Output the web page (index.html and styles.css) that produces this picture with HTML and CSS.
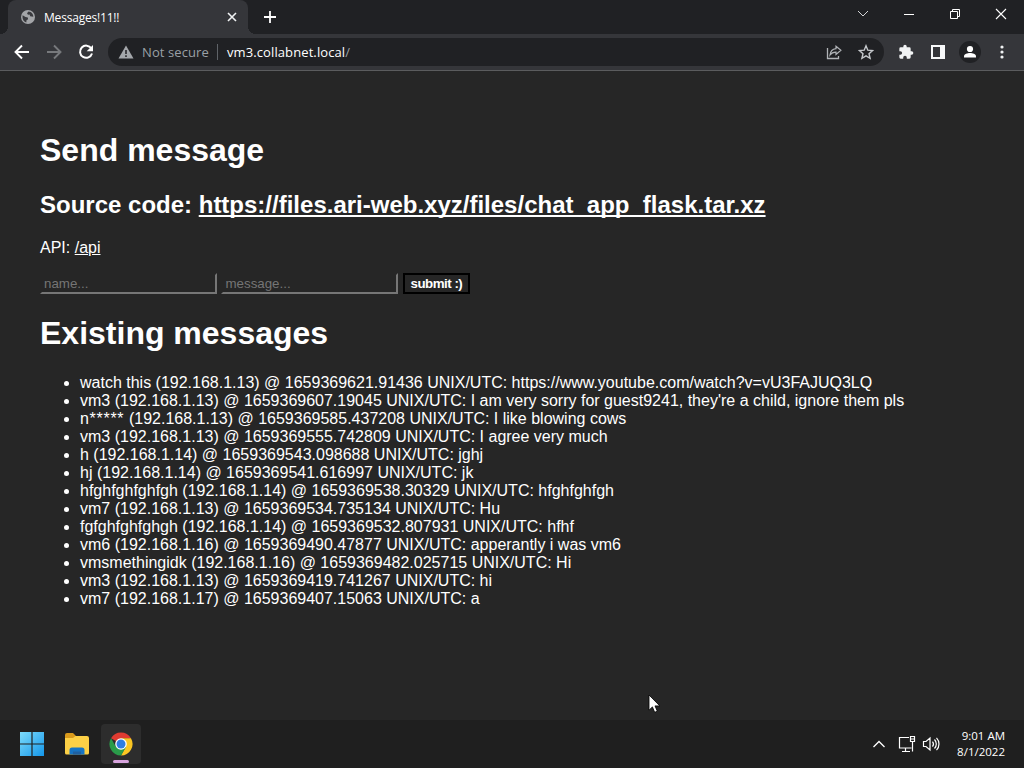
FILE: index.html
```html
<!DOCTYPE html>
<html lang="en">
<head>
  <meta charset="UTF-8">
  <title>Messages!11!!</title>
  <link rel="stylesheet" href="styles.css">
</head>
<body>
  <div class="tabstrip">
    <div class="tab">
      <svg class="globe" width="14" height="14" viewBox="0 0 14 14"><circle cx="7" cy="7" r="7" fill="#a3a5a8"/><path d="M1.6 5.2 4.5 7l2.3.5.3 1.8-1.6 1-.2 2.1C2.8 11.800 1.100 9 1.600 5.200zM7.500 1.400 6 3.300l1 1.500 1.600-.2.6 1.600 3.100.6C12.500 4 10.300 1.600 7.500 1.400z" fill="#393a3e"/></svg>
      <span class="tab-title">Messages!11!!</span>
      <svg width="10" height="10" viewBox="0 0 10 10"><path d="M1 1l8 8M9 1L1 9" stroke="#f1f3f4" stroke-width="1.6"/></svg>
    </div>
    <svg class="new-tab" width="12" height="12" viewBox="0 0 12 12"><path d="M6 0v12M0 6h12" stroke="#fff" stroke-width="1.8"/></svg>
    <div class="window-buttons">
      <svg width="12" height="12" viewBox="0 0 12 12"><path d="M1 3l5 5 5-5" fill="none" stroke="#d5d6d8"/></svg>
      <svg width="12" height="12" viewBox="0 0 12 12"><path d="M1 6.500h10" stroke="#fff"/></svg>
      <svg width="12" height="12" viewBox="0 0 12 12"><path d="M1.500 3.500h7v7h-7zM3.500 3.500v-2h7v7h-2" fill="none" stroke="#fff"/></svg>
      <svg width="12" height="12" viewBox="0 0 12 12"><path d="M1 1l10 10M11 1L1 11" stroke="#fff" stroke-width="1.1"/></svg>
    </div>
  </div>

  <div class="toolbar">
    <svg class="nav" width="16" height="16" viewBox="0 0 16 16"><path d="M15 8H2M8 1.500L1.500 8 8 14.500" fill="none" stroke="#fff" stroke-width="1.900"/></svg>
    <svg class="nav" width="16" height="16" viewBox="0 0 16 16"><path d="M1 8h13M8 1.500L14.500 8 8 14.500" fill="none" stroke="#77797c" stroke-width="1.900"/></svg>
    <svg class="nav" width="16" height="16" viewBox="0 0 16 16"><path d="M13.300 4.400A6.100 6.100 0 1 0 14 9.500" fill="none" stroke="#fff" stroke-width="2"/><path d="M15 1v6.300H8.700z" fill="#fff"/></svg>
    <div class="omnibox">
      <svg width="16" height="14" viewBox="0 0 16 14"><path d="M8 .5L15.500 13.500H.5z" fill="#a4a7ab"/><path d="M8 5v4M8 10.300V12" stroke="#202124" stroke-width="1.500"/></svg>
      <span class="not-secure">Not secure</span>
      <span class="divider"></span>
      <span class="url">vm3.collabnet.local<i>/</i></span>
      <svg class="share" width="16" height="16" viewBox="0 0 16 16"><path d="M1.500 4v10.500h11V12" fill="none" stroke="#b0b3b7" stroke-width="1.300"/><path d="M10 2.200L14.900 6.300 10 10.400V8.100C7.300 8 5.500 8.900 4 11c.4-3.500 2.500-6 6-6.400z" fill="none" stroke="#b0b3b7" stroke-width="1.200"/></svg>
      <svg width="16" height="16" viewBox="0 0 16 16"><path d="M8 1.800l1.800 4.400 4.800.4-3.600 3.100 1.100 4.700L8 11.900l-4.100 2.500L5 9.700 1.400 6.600l4.800-.4z" fill="none" stroke="#c5c8cc" stroke-width="1.400"/></svg>
    </div>
    <svg class="puzzle" width="16" height="16" viewBox="0 0 24 24"><path d="M20.500 11H19V7a2 2 0 0 0-2-2h-4V3.500a2.500 2.500 0 0 0-5 0V5H4a2 2 0 0 0-2 2v3.800h1.500a2.700 2.700 0 0 1 0 5.400H2V20a2 2 0 0 0 2 2h3.800v-1.500a2.700 2.700 0 0 1 5.400 0V22H17a2 2 0 0 0 2-2v-4h1.500a2.500 2.500 0 0 0 0-5z" fill="#f1f3f4"/></svg>
    <svg class="panel" width="14" height="14" viewBox="0 0 14 14"><path d="M0 0h14v14H0zM2 2v10h7V2z" fill="#f8f9fa" fill-rule="evenodd"/></svg>
    <svg class="profile" width="22" height="22" viewBox="0 0 22 22"><circle cx="11" cy="11" r="11" fill="#202124"/><circle cx="11" cy="8" r="3.100" fill="#fff"/><path d="M5 16.500v-1.300c0-2 3.500-3.200 6-3.200s6 1.200 6 3.200v1.300z" fill="#fff"/></svg>
    <svg class="kebab" width="4" height="14" viewBox="0 0 4 14"><g fill="#f1f3f4"><circle cx="2" cy="2" r="1.600"/><circle cx="2" cy="7" r="1.600"/><circle cx="2" cy="12" r="1.600"/></g></svg>
  </div>

  <main class="page">
    <h1>Send message</h1>
    <h2>Source code: <a href="#">https://files.ari-web.xyz/files/chat_app_flask.tar.xz</a></h2>
    <p>API: <a href="#">/api</a></p>
    <form>
      <input type="text" placeholder="name...">
      <input type="text" placeholder="message...">
      <button type="button">submit :)</button>
    </form>
    <h1>Existing messages</h1>
    <ul>
      <li>watch this (192.168.1.13) @ 1659369621.91436 UNIX/UTC: https://www.youtube.com/watch?v=vU3FAJUQ3LQ</li>
      <li>vm3 (192.168.1.13) @ 1659369607.19045 UNIX/UTC: I am very sorry for guest9241, they're a child, ignore them pls</li>
      <li><span class="masked">n*****</span> (192.168.1.13) @ 1659369585.437208 UNIX/UTC: I like blowing cows</li>
      <li>vm3 (192.168.1.13) @ 1659369555.742809 UNIX/UTC: I agree very much</li>
      <li>h (192.168.1.14) @ 1659369543.098688 UNIX/UTC: jghj</li>
      <li>hj (192.168.1.14) @ 1659369541.616997 UNIX/UTC: jk</li>
      <li>hfghfghfghfgh (192.168.1.14) @ 1659369538.30329 UNIX/UTC: hfghfghfgh</li>
      <li>vm7 (192.168.1.13) @ 1659369534.735134 UNIX/UTC: Hu</li>
      <li>fgfghfghfghgh (192.168.1.14) @ 1659369532.807931 UNIX/UTC: hfhf</li>
      <li>vm6 (192.168.1.16) @ 1659369490.47877 UNIX/UTC: apperantly i was vm6</li>
      <li>vmsmethingidk (192.168.1.16) @ 1659369482.025715 UNIX/UTC: Hi</li>
      <li>vm3 (192.168.1.13) @ 1659369419.741267 UNIX/UTC: hi</li>
      <li>vm7 (192.168.1.17) @ 1659369407.15063 UNIX/UTC: a</li>
    </ul>
  </main>

  <footer class="taskbar">
    <svg class="start" width="24" height="24" viewBox="0 0 24 24">
      <defs><linearGradient id="win" x1="0" y1="0" x2="24" y2="24" gradientUnits="userSpaceOnUse"><stop offset="0" stop-color="#7ddcfb"/><stop offset="1" stop-color="#1496ea"/></linearGradient></defs>
      <path d="M0 0h11.400v11.400H0zM12.600 0H24v11.400H12.600zM0 12.600h11.400V24H0zM12.600 12.600H24V24H12.600z" fill="url(#win)"/>
    </svg>
    <svg class="explorer" width="26" height="24" viewBox="0 0 26 24">
      <path d="M1 3a2 2 0 0 1 2-2h6l3 3v5H1z" fill="#d99a1c"/>
      <path d="M1 6h8l2.500-2H23a2 2 0 0 1 2 2v15a1.500 1.500 0 0 1-1.500 1.500h-21A1.500 1.500 0 0 1 1 21z" fill="#fcd046"/>
      <path d="M5.500 22.500V18a2.500 2.500 0 0 1 2.500-2.500h10a2.500 2.500 0 0 1 2.500 2.500v4.500z" fill="#1674c4"/><path d="M9 19.500h8v3H9z" fill="#2060a0"/>
    </svg>
    <div class="task-active">
      <svg width="24" height="24" viewBox="0 0 24 24">
        <path d="M12 12L2.040 6.250A11.500 11.500 0 0 1 21.960 6.250H12z" fill="#df3b31"/>
        <path d="M12 12L21.960 6.250A11.500 11.500 0 0 1 12 23.500L17 14.500z" fill="#fbc622"/>
        <path d="M12 12L17 14.900 12 23.500A11.500 11.500 0 0 1 2.040 6.250L7 14.900z" fill="#2a9c4a"/>
        <path d="M12 6.250h9.960L17 14.900z" fill="#fbc622"/>
        <circle cx="12" cy="12" r="5.800" fill="#fff"/><circle cx="12" cy="12" r="4.500" fill="#2f7de1"/>
      </svg>
    </div>
    <div class="tray">
      <svg class="chevron" width="14" height="8" viewBox="0 0 14 8"><path d="M1.500 7L7 1.500 12.500 7" fill="none" stroke="#fff" stroke-width="1.300"/></svg>
      <svg class="network" width="18" height="18" viewBox="0 0 18 18"><path d="M11 2.500H1.500v10.500H13.500M7.500 13v3M4 16.500h8M14.500 7v9.500M12.500 1.500h4v5h-4zM12.500 4h4" fill="none" stroke="#fff" stroke-width="1.200"/></svg>
      <svg class="volume" width="18" height="16" viewBox="0 0 18 16"><path d="M1.500 5.500H4L8 2v12L4 10.500H1.500zM10.500 5.500a4 4 0 0 1 0 5M12.500 3.500a6.500 6.500 0 0 1 0 9M14.500 1.800a9 9 0 0 1 0 12.400" fill="none" stroke="#fff" stroke-width="1.200"/></svg>
      <div class="clock"><div>9:01 AM</div><div>8/1/2022</div></div>
    </div>
  </footer>

  <svg class="cursor" width="13" height="20" viewBox="0 0 13 20"><path d="M1 1v15.200l3.400-3.300 2.300 5.400 2.600-1.100L7 11.900h4.800z" fill="#fff" stroke="#000" stroke-width=".8"/></svg>
</body>
</html>
```
FILE: styles.css
```css
* {
  box-sizing: border-box;
}

body {
  margin: 0;
  height: 768px;
  overflow: hidden;
  display: flex;
  flex-direction: column;
  background: #262626;
  color: #fff;
  font-family: "Open Sans", "Noto Sans", sans-serif;
}

svg {
  flex: none;
}

/* Tab strip */
.tabstrip {
  height: 34px;
  flex: none;
  display: flex;
  background: #202124;
  padding-left: 8px;
}

.tab {
  position: relative;
  width: 240px;
  height: 34px;
  display: flex;
  align-items: center;
  padding: 0 11px 0 13px;
  background: #35363a;
  border-radius: 8px 8px 0 0;
}

/* Flared bottom corners of the active tab */
.tab::before,
.tab::after {
  content: "";
  position: absolute;
  bottom: 0;
  width: 8px;
  height: 8px;
}

.tab::before {
  left: -8px;
  background: radial-gradient(circle at 0 0, transparent 8px, #35363a 8px);
}

.tab::after {
  right: -8px;
  background: radial-gradient(circle at 100% 0, transparent 8px, #35363a 8px);
}

.tab-title {
  flex: 1;
  margin-left: 9px;
  font-size: 12px;
  letter-spacing: -0.2px;
}

.new-tab {
  margin: 11px 0 0 16px;
}

.window-buttons {
  display: flex;
  gap: 34px;
  margin: 8px 17px 0 auto;
}

/* Toolbar */
.toolbar {
  height: 37px;
  flex: none;
  display: flex;
  align-items: center;
  padding-left: 14px;
  background: #35363a;
  border-bottom: 1px solid #5b5c5e;
}

.nav {
  margin-right: 16px;
}

.omnibox {
  width: 776px;
  height: 28px;
  margin-left: -2px;
  padding: 0 10px;
  display: flex;
  align-items: center;
  background: #202124;
  border-radius: 14px;
  font-size: 13px;
}

.not-secure {
  width: 67px;
  margin-left: 8px;
  color: #9aa0a6;
  white-space: nowrap;
  letter-spacing: 0.1px;
}

.divider {
  width: 1px;
  height: 16px;
  margin: 0 9px 0 8px;
  background: #5f6368;
}

.url {
  letter-spacing: 0.1px;
}

.url i {
  font-style: normal;
  color: #9aa0a6;
}

.share {
  margin: 0 16px 0 auto;
}

.puzzle {
  margin-left: 14px;
}

.panel {
  margin-left: 17px;
}

.profile {
  margin-left: 14px;
}

.kebab {
  margin-left: 19px;
}

/* Page */
.page {
  flex: 1;
  padding: 40px;
  font-family: "Liberation Sans", Arial, sans-serif;
  font-size: 16px;
  line-height: 18px;
}

h1 {
  margin: 21.4px 0 22.4px;
  font-size: 32px;
  line-height: 36px;
}

h2 {
  margin: 20px 0 21px;
  font-size: 24px;
  line-height: 27px;
}

p {
  margin: 16px 0;
}

a {
  color: #fff;
}

h2 a {
  text-underline-offset: 2px;
  text-decoration-thickness: 2px;
  text-decoration-skip-ink: none;
}

form {
  height: 21px;
}

form input,
form button {
  height: 21px;
  font-family: "Liberation Sans", Arial, sans-serif;
  font-size: 13.333px;
  line-height: 15px;
  background: transparent;
  color: #fff;
}

form input {
  width: 177px;
  padding: 1px 2px;
  border: 2px solid #767676;
  border-top-color: #262626;
  border-left-color: #262626;
}

form input::placeholder {
  color: #757575;
}

form button {
  width: 67px;
  padding: 0;
  border: 2px solid #000;
  font-weight: bold;
  letter-spacing: -0.5px;
}

ul {
  margin: 0;
  padding-left: 40px;
}

.masked {
  display: inline-block;
  width: 44.5px;
  letter-spacing: 0.7px;
}

/* Taskbar */
.taskbar {
  height: 48px;
  flex: none;
  display: flex;
  align-items: center;
  padding: 0 19px 0 20px;
  background: #1f1f1f;
}

.explorer {
  margin-left: 20px;
}

.task-active {
  width: 40px;
  height: 40px;
  margin-left: 11px;
  position: relative;
  display: flex;
  align-items: center;
  justify-content: center;
  background: #2d2d2d;
  border-radius: 4px;
}

.task-active::after {
  content: "";
  position: absolute;
  bottom: 1px;
  left: 12px;
  width: 16px;
  height: 3px;
  border-radius: 2px;
  background: #d8a4de;
}

.tray {
  display: flex;
  align-items: center;
  margin-left: auto;
}

.network {
  margin-left: 12px;
}

.volume {
  margin-left: 6px;
}

.clock {
  width: 65px;
  font-size: 11.5px;
  line-height: 16px;
  text-align: right;
}

.cursor {
  position: absolute;
  left: 648px;
  top: 694px;
}
```
